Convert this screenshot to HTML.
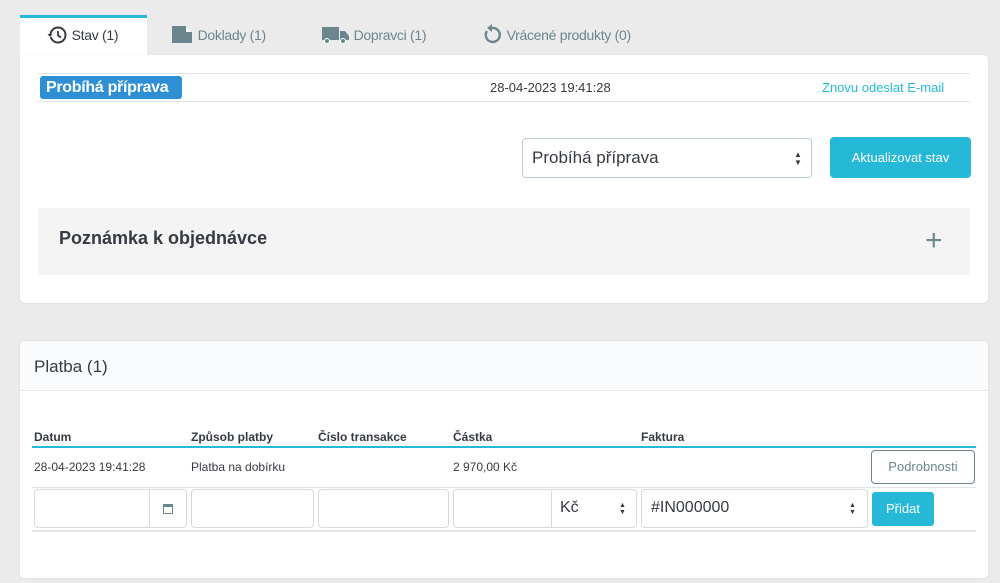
<!DOCTYPE html>
<html><head><meta charset="utf-8"><style>
*{box-sizing:border-box;margin:0;padding:0}
body{width:1000px;height:583px;background:#ebebec;font-family:"Liberation Sans",sans-serif;color:#363a41;position:relative;overflow:hidden;font-size:13px}
.a{position:absolute}
.card{background:#fff;border-radius:5px;box-shadow:0 0 2px rgba(0,0,0,.08)}
.tab{position:absolute;top:15px;height:40px;line-height:40px;font-size:14px;color:#6c868e;letter-spacing:-.3px}
.hl{position:absolute;height:1px;background:#dfe3e6}
.inp{position:absolute;top:489px;height:39px;border:1px solid #d5dadd;border-radius:4px;background:#fff}
</style></head><body>
<div class="a" style="left:20px;top:15px;width:127px;height:42px;background:#fff;border-top:3px solid #25b9d7"></div>
<div class="tab" style="left:46px;color:#363a41">
<svg width="22" height="20" viewBox="0 0 22 20" style="vertical-align:-5px"><circle cx="12" cy="10" r="7.5" fill="none" stroke="#363a41" stroke-width="2"/><path d="M12 6v4.5l3 2" fill="none" stroke="#363a41" stroke-width="1.8"/><path d="M1 9l3.5 3.5L8 9z" fill="#fff"/><path d="M1.5 9h5l-2.5 3z" fill="#363a41"/></svg> Stav (1)</div>
<div class="tab" style="left:172px"><svg width="22" height="18" viewBox="0 0 22 18" style="vertical-align:-3px"><path d="M0 1h14l6 6v11H0z" fill="#6c868e"/><path d="M14 1v6h6" fill="#fff"/></svg> Doklady (1)</div>
<div class="tab" style="left:322px"><svg width="28" height="20" viewBox="0 0 28 20" style="vertical-align:-5px"><rect x="0" y="2" width="17" height="13" fill="#6c868e"/><path d="M18 6h5l4 5v4h-9z" fill="#6c868e"/><circle cx="5" cy="16" r="2.5" fill="#6c868e" stroke="#fff"/><circle cx="21" cy="16" r="2.5" fill="#6c868e" stroke="#fff"/></svg> Dopravci (1)</div>
<div class="tab" style="left:481px"><svg width="22" height="22" viewBox="0 0 22 22" style="vertical-align:-5px"><path d="M6 8a7 7 0 1 0 5-3" fill="none" stroke="#6c868e" stroke-width="2.4"/><path d="M11 1v8l-5-4z" fill="#6c868e"/></svg> Vrácené produkty (0)</div>

<div class="a card" style="left:20px;top:55px;width:968px;height:248px;border-top-left-radius:0"></div>
<div class="hl" style="left:38px;top:73px;width:932px"></div>
<div class="hl" style="left:38px;top:101px;width:932px"></div>
<div class="a" style="left:40px;top:76px;width:142px;height:23px;background:#2e8fd4;border-radius:3px;color:#fff;font-size:16px;font-weight:bold;line-height:23px;padding-left:6px;letter-spacing:-.3px">Probíhá příprava</div>
<div class="a" style="left:490px;top:80px;font-size:13px">28-04-2023 19:41:28</div>
<div class="a" style="left:822px;top:80px;font-size:13px;color:#25b9d7">Znovu odeslat E-mail</div>
<div class="a" style="left:522px;top:138px;width:290px;height:40px;border:1px solid #bbcdd2;border-radius:4px;font-size:17px;line-height:38px;padding-left:9px">Probíhá příprava</div>
<div class="a" style="left:794px;top:151px;font-size:8px;line-height:8px">&#9650;<br>&#9660;</div>
<div class="a" style="left:830px;top:137px;width:141px;height:41px;background:#25b9d7;border-radius:4px;color:#fff;font-size:13px;line-height:41px;text-align:center">Aktualizovat stav</div>
<div class="a" style="left:38px;top:208px;width:932px;height:67px;background:#f4f4f5"></div>
<div class="a" style="left:59px;top:228px;font-size:18px;font-weight:bold">Poznámka k objednávce</div>
<div class="a" style="left:925px;top:226px;font-size:30px;line-height:30px;color:#6c868e;font-weight:300">+</div>

<div class="a card" style="left:20px;top:341px;width:968px;height:237px"></div>
<div class="a" style="left:20px;top:341px;width:968px;height:50px;background:#fafbfc;border-bottom:1px solid #e9ebee;border-radius:5px 5px 0 0"></div>
<div class="a" style="left:34px;top:357px;font-size:17px">Platba (1)</div>
<div class="a" style="top:430px;left:34px;font-size:12px;font-weight:bold">Datum</div>
<div class="a" style="top:430px;left:191px;font-size:12px;font-weight:bold">Způsob platby</div>
<div class="a" style="top:430px;left:318px;font-size:12px;font-weight:bold">Číslo transakce</div>
<div class="a" style="top:430px;left:453px;font-size:12px;font-weight:bold">Částka</div>
<div class="a" style="top:430px;left:641px;font-size:12px;font-weight:bold">Faktura</div>
<div class="a" style="left:32px;top:446px;width:944px;height:2px;background:#25b9d7"></div>
<div class="a" style="top:460px;left:34px;font-size:12px">28-04-2023 19:41:28</div>
<div class="a" style="top:460px;left:191px;font-size:12px">Platba na dobírku</div>
<div class="a" style="top:460px;left:453px;font-size:12px">2 970,00 Kč</div>
<div class="a" style="left:871px;top:450px;width:104px;height:34px;border:1px solid #6c868e;border-radius:4px;color:#6c868e;font-size:13px;line-height:32px;text-align:center">Podrobnosti</div>
<div class="hl" style="left:32px;top:487px;width:944px"></div>
<div class="inp" style="left:34px;width:153px"><div class="a" style="left:114px;top:0;width:1px;height:37px;background:#d5dadd"></div><div class="a" style="left:128px;top:14px;width:10px;height:10px;border:1.5px solid #6c868e;border-top-width:3px"></div></div>
<div class="inp" style="left:191px;width:123px"></div>
<div class="inp" style="left:318px;width:131px"></div>
<div class="inp" style="left:453px;width:184px"><div class="a" style="left:97px;top:0;width:1px;height:37px;background:#d5dadd"></div><div class="a" style="left:106px;top:9px;font-size:16px">Kč</div><div class="a" style="left:165px;top:12px;font-size:7px;line-height:7px">&#9650;<br>&#9660;</div></div>
<div class="inp" style="left:641px;width:227px"><div class="a" style="left:9px;top:9px;font-size:16px">#IN000000</div><div class="a" style="left:207px;top:12px;font-size:7px;line-height:7px">&#9650;<br>&#9660;</div></div>
<div class="a" style="left:872px;top:492px;width:62px;height:34px;background:#25b9d7;border-radius:3px;color:#fff;font-size:13px;line-height:34px;text-align:center">Přidat</div>
<div class="a" style="left:32px;top:530px;width:944px;height:2px;background:#e0e4e6"></div>
</body></html>
